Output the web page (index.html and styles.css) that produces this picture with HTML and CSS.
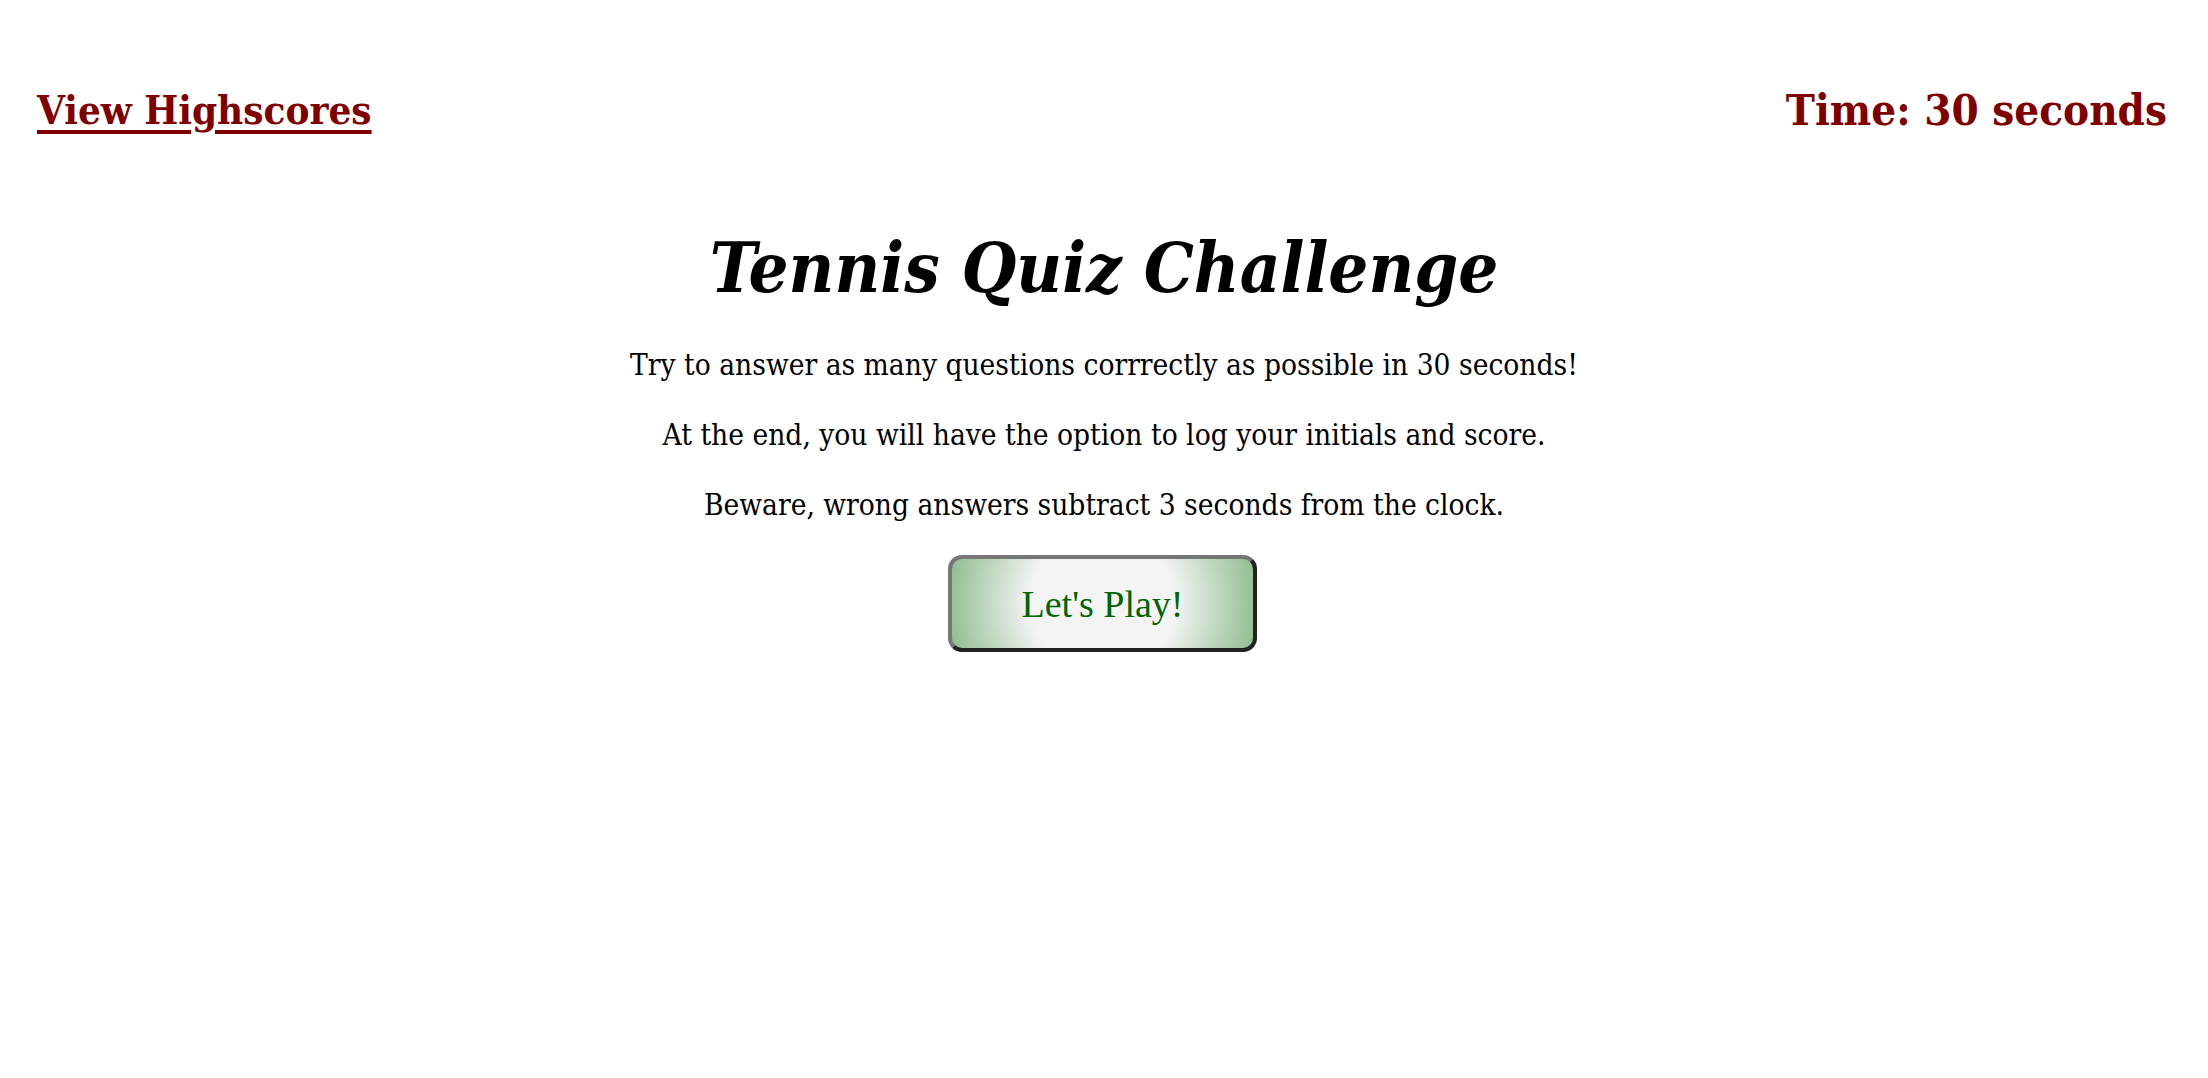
FILE: index.html
```html
<!DOCTYPE html>
<html lang="en">
<head>
<meta charset="utf-8">
<title>Tennis Quiz Challenge</title>
<link rel="stylesheet" href="styles.css">
</head>
<body>
<header class="top-bar">
  <a class="highscores-link" href="#">View Highscores</a>
  <div class="timer">Time: 30 seconds</div>
</header>
<main class="intro">
  <h1 class="title">Tennis Quiz Challenge</h1>
  <p class="intro-text">Try to answer as many questions corrrectly as possible in 30 seconds!</p>
  <p class="intro-text">At the end, you will have the option to log your initials and score.</p>
  <p class="intro-text">Beware, wrong answers subtract 3 seconds from the clock.</p>
  <button class="start-btn" type="button">Let's Play!</button>
</main>
</body>
</html>
```

FILE: styles.css
```css
html, body {
  margin: 0;
  padding: 0;
  background: #ffffff;
}

body {
  font-family: "DejaVu Serif", "Liberation Serif", serif;
  font-stretch: condensed;
  color: #000000;
}

.top-bar {
  display: flex;
  justify-content: space-between;
  align-items: center;
  padding: 84px 41px 0 37px;
}

.highscores-link,
.timer {
  color: #800000;
  font-weight: bold;
  font-size: 40px;
  line-height: 52px;
}

.timer {
  font-size: 43.5px;
}

.highscores-link {
  text-decoration: underline;
  text-decoration-thickness: 4px;
  text-underline-offset: 6px;
}

.intro {
  display: flex;
  flex-direction: column;
  align-items: center;
  padding-top: 87px;
}

.title {
  margin: 0 0 35px 0;
  font-size: 70px;
  font-weight: bold;
  font-style: italic;
  line-height: 90px;
}

.intro-text {
  margin: 0 0 36px 0;
  font-size: 29.6px;
  line-height: 34px;
}

.start-btn {
  margin-top: -3px;
  margin-right: 3px;
  width: 309px;
  height: 97px;
  border-width: 4px;
  border-style: solid;
  border-color: #767676 #222222 #222222 #767676;
  border-radius: 14px;
  background: radial-gradient(circle at center, #f4f4f4 0, #f4f4f4 72px, #8fbc8f 158px);
  color: #006400;
  font-family: "Liberation Serif", serif;
  font-stretch: normal;
  font-size: 38px;
  cursor: pointer;
}
```
